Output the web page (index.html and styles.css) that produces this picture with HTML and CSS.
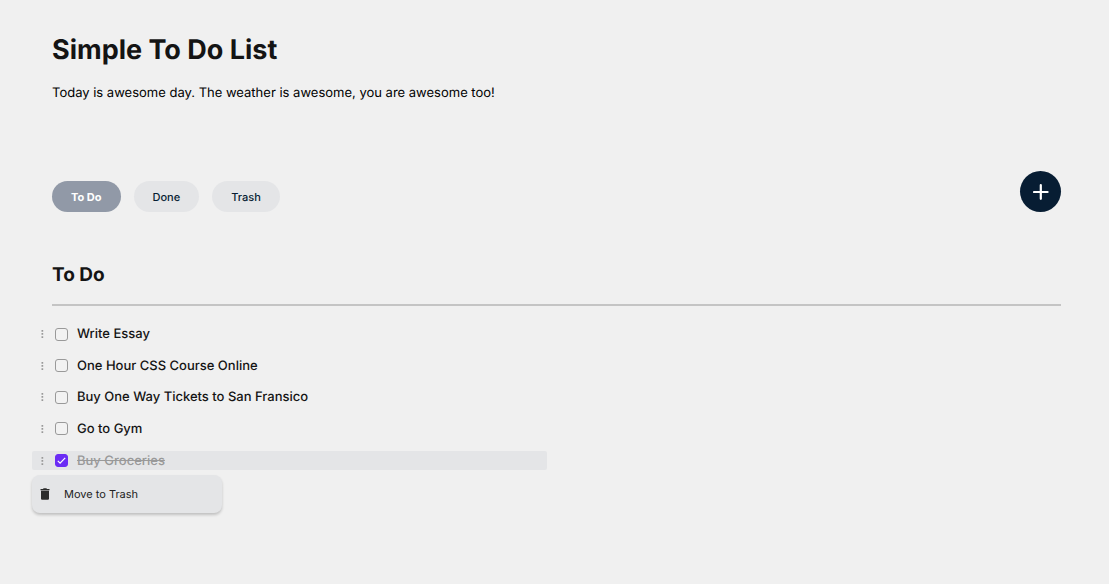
FILE: index.html
```html
<!DOCTYPE html>
<html lang="en">
<head>
<meta charset="utf-8">
<title>Simple To Do List</title>
<link rel="stylesheet" href="styles.css">
</head>
<body>
<main class="page">
  <header class="intro">
    <h1 class="title">Simple To Do List</h1>
    <p class="subtitle">Today is awesome day. The weather is awesome, you are awesome too!</p>
  </header>
  <div class="toolbar">
    <nav class="filters" aria-label="Lists">
      <button class="filter filter-active" type="button">To Do</button>
      <button class="filter" type="button">Done</button>
      <button class="filter" type="button">Trash</button>
    </nav>
    <button class="add" type="button" aria-label="Add task">
      <svg class="add-icon" viewBox="0 0 16 16"><path d="M7.800 1.200v13.600M1 8h13.600" stroke="#fff" stroke-width="2.200" stroke-linecap="round"/></svg>
    </button>
  </div>
  <section class="section">
    <h2 class="heading">To Do</h2>
    <ul class="tasks">
      <li class="task"><button class="handle" type="button" aria-label="Task menu"><svg class="dots" viewBox="0 0 3 8"><path d="M.5 0h1.700v1.700H.5zM.5 3.100h1.700v1.700H.5zM.5 6.200h1.700v1.700H.5z"/></svg></button><input class="check" type="checkbox" id="t1"><label class="name" for="t1">Write Essay</label></li>
      <li class="task"><button class="handle" type="button" aria-label="Task menu"><svg class="dots" viewBox="0 0 3 8"><path d="M.5 0h1.700v1.700H.5zM.5 3.100h1.700v1.700H.5zM.5 6.200h1.700v1.700H.5z"/></svg></button><input class="check" type="checkbox" id="t2"><label class="name" for="t2">One Hour CSS Course Online</label></li>
      <li class="task"><button class="handle" type="button" aria-label="Task menu"><svg class="dots" viewBox="0 0 3 8"><path d="M.5 0h1.700v1.700H.5zM.5 3.100h1.700v1.700H.5zM.5 6.200h1.700v1.700H.5z"/></svg></button><input class="check" type="checkbox" id="t3"><label class="name" for="t3">Buy One Way Tickets to San Fransico</label></li>
      <li class="task"><button class="handle" type="button" aria-label="Task menu"><svg class="dots" viewBox="0 0 3 8"><path d="M.5 0h1.700v1.700H.5zM.5 3.100h1.700v1.700H.5zM.5 6.200h1.700v1.700H.5z"/></svg></button><input class="check" type="checkbox" id="t4"><label class="name" for="t4">Go to Gym</label></li>
      <li class="task task-selected"><button class="handle" type="button" aria-label="Task menu"><svg class="dots" viewBox="0 0 3 8"><path d="M.5 0h1.700v1.700H.5zM.5 3.100h1.700v1.700H.5zM.5 6.200h1.700v1.700H.5z"/></svg></button><span class="checkwrap"><input class="check" type="checkbox" id="t5" checked><svg class="tick" viewBox="0 0 13 13"><path d="M2.800 6.900l2.300 2.300L10.200 3.800" fill="none" stroke="#fff" stroke-width="1.200"/></svg></span><label class="name" for="t5">Buy Groceries</label></li>
    </ul>
    <button class="menu" type="button">
      <svg class="trash" viewBox="0 0 10 12"><path d="M.5 1h2.400l.8-.7h2.600l.8.7h2.400v1.200h-9zM1 2.800h8v7.900q0 1.100-1.100 1.100H2.100Q1 11.800 1 10.700z"/></svg>
      Move to Trash
    </button>
  </section>
</main>
</body>
</html>
```
FILE: styles.css
```css
* { box-sizing: border-box; }
body { margin: 0; background: #f0f0f0; color: #141414; font-family: Inter, sans-serif; text-rendering: geometricPrecision; }
button { border: 0; padding: 0; font-family: inherit; text-rendering: inherit; cursor: pointer; }
.page { padding: 33px 48px 32px 52px; }
.title { margin: 0; font-size: 27px; line-height: 34px; font-weight: 700; }
.subtitle { margin: 16px 0 0; color: #000; font-size: 13px; line-height: 20px; font-weight: 400; }
.toolbar { display: flex; justify-content: space-between; align-items: flex-start; margin-top: 68px; }
.filters { display: flex; gap: 13px; padding-top: 10px; }
.filter { height: 31px; padding: 0 19px; border-radius: 16px; background: #e4e5e7; color: #071d33; font-size: 11px; font-weight: 500; }
.filter-active { background: #9199a7; color: #fff; font-weight: 700; }
.add { display: flex; align-items: center; justify-content: center; width: 41px; height: 41px; border-radius: 50%; background: #071d33; }
.add-icon { width: 16px; height: 16px; }
.heading { margin: 49px 0 0; padding-bottom: 15px; border-bottom: 2px solid #c4c4c4; font-size: 19px; line-height: 28px; font-weight: 700; }
.tasks { display: grid; gap: 14px; width: 51%; margin: 19px 0 0 -20px; padding: 0; list-style: none; }
.task { display: flex; align-items: center; height: 18px; padding-left: 9px; border-radius: 2px; }
.task:nth-child(even) { height: 17px; }
.task-selected { height: 19px; background: #e4e5e7; }
.handle { display: flex; width: 3px; margin-right: 11px; background: none; }
.dots { width: 3px; height: 8px; fill: #999; }
.check { appearance: none; display: block; width: 13px; height: 13px; margin: 0; border: 1px solid #999; border-radius: 3px; background: #f2f2f2; }
.check:checked { border-color: #6b2cf5; background: #6b2cf5; }
.checkwrap { display: grid; }
.checkwrap > * { grid-area: 1 / 1; }
.tick { width: 13px; height: 13px; pointer-events: none; }
.name { margin-left: 9px; font-size: 13px; line-height: 18px; font-weight: 500; }
.task-selected .name { color: #999; text-decoration: line-through; }
.menu { display: flex; align-items: center; gap: 14px; width: 190px; height: 38px; margin: 5px 0 0 -20px; padding-left: 8px; border-radius: 8px; background: #e4e5e7; box-shadow: 0 2px 3px #0003; color: #222; font-size: 11px; font-weight: 400; }
.trash { width: 10px; height: 12px; fill: #2c2c2c; }
```
